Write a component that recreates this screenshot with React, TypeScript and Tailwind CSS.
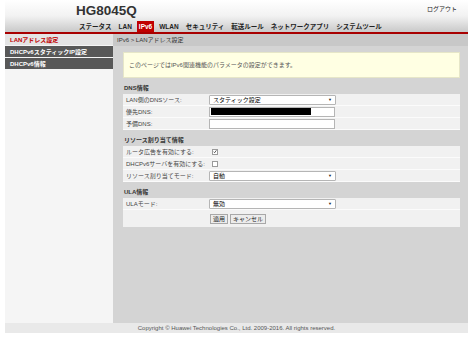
const font = { fontFamily: '"Liberation Sans", "Noto Sans CJK JP", sans-serif' };

const tabs = ["ステータス", "LAN", "IPv6", "WLAN", "セキュリティ", "転送ルール", "ネットワークアプリ", "システムツール"];

const sideItems = [
  { label: "LANアドレス設定", active: true },
  { label: "DHCPv6スタティックIP設定", active: false },
  { label: "DHCPv6情報", active: false },
];

function Select({ value }: { value: string }) {
  return (
    <div className="flex h-[10px] w-[127px] items-center justify-between rounded-[1px] border border-[#b5b5b5] bg-white pl-[3px] pr-[3px]">
      <span>{value}</span>
      <span className="text-[4px] text-[#222]">▼</span>
    </div>
  );
}

function Row({ label, children }: { label: string; children?: React.ReactNode }) {
  return (
    <div className="flex h-[12px] items-center border-b border-[#fbfbfb] bg-[#f1f1f1]">
      <div className="w-[86px] pl-[3px] text-[#444]">{label}</div>
      <div className="flex items-center">{children}</div>
    </div>
  );
}

function Heading({ children }: { children: React.ReactNode }) {
  return <div className="pb-[2px] pl-[1px] pt-[6px] font-bold leading-[8px] text-[#333]">{children}</div>;
}

function Checkbox({ checked }: { checked?: boolean }) {
  return (
    <div className="ml-[3px] flex h-[6px] w-[6px] items-center justify-center border border-[#9a9a9a] bg-white">
      {checked && (
        <svg width="5" height="5" viewBox="0 0 10 10">
          <path d="M1.5 5.5 L4 8 L8.5 2" fill="none" stroke="#333" strokeWidth="2" />
        </svg>
      )}
    </div>
  );
}

export default function App() {
  return (
    <div className="h-[337px] w-[474px] overflow-hidden bg-white text-[6px] leading-[8px]" style={font}>
      <div className="ml-[5px] w-[463px]">
        {/* header */}
        <div className="h-[32px] bg-gradient-to-b from-white via-[#f2f2f2] to-[#c9c9c9]">
          <div className="flex items-start justify-between">
            <div className="pl-[71px] pt-[3px] text-[13.5px] font-bold leading-[15px] text-[#333]">HG8045Q</div>
            <div className="pr-[11px] pt-[5px] text-[#222]">ログアウト</div>
          </div>
          <div className="mt-[3px] flex h-[11px] items-stretch gap-[3px] pl-[72px] text-[6.5px]">
            {tabs.map((t) => (
              <div
                key={t}
                className={`flex items-center px-[2px] font-bold ${
                  t === "IPv6" ? "bg-[#c00000] text-white" : "text-[#222]"
                }`}
              >
                {t}
              </div>
            ))}
          </div>
        </div>
        <div className="h-[2px] bg-[#a80000]" />

        {/* body */}
        <div className="flex h-[289px]">
          <div className="w-[108px] bg-[#f5f5f5]">
            {sideItems.map((s) => (
              <div
                key={s.label}
                className={`flex h-[12px] items-center border-b border-[#f5f5f5] pl-[5px] font-bold ${
                  s.active ? "bg-[#e4e4e4] text-[#c00000]" : "bg-[#585858] text-white"
                }`}
              >
                {s.label}
              </div>
            ))}
          </div>

          <div className="flex-1 bg-[#d4d4d4]">
            <div className="flex h-[12px] items-center bg-[#c8c8c8] pl-[4px] text-[#333]">IPv6 &gt; LANアドレス設定</div>
            <div className="pl-[10px] pr-[8px] pt-[6px]">
              <div className="flex h-[26px] items-center border border-[#e6e6c8] bg-[#ffffe3] pl-[5px] text-[#555]">
                このページではIPv6関連機能のパラメータの設定ができます。
              </div>

              <Heading>DNS情報</Heading>
              <Row label="LAN側のDNSソース:">
                <Select value="スタティック設定" />
              </Row>
              <Row label="優先DNS:">
                <div className="flex h-[10px] w-[126px] items-center border border-[#b5b5b5] bg-white pl-[1px]">
                  <div className="h-[7px] w-[100px] bg-black" />
                </div>
              </Row>
              <Row label="予備DNS:">
                <div className="h-[10px] w-[126px] border border-[#b5b5b5] bg-white" />
              </Row>

              <Heading>リソース割り当て情報</Heading>
              <Row label="ルータ広告を有効にする:">
                <Checkbox checked />
              </Row>
              <Row label="DHCPv6サーバを有効にする:">
                <Checkbox />
              </Row>
              <Row label="リソース割り当てモード:">
                <Select value="自動" />
              </Row>

              <Heading>ULA情報</Heading>
              <Row label="ULAモード:">
                <Select value="無効" />
              </Row>
              <div className="flex h-[17px] items-center gap-[2px] bg-[#f1f1f1] pl-[87px]">
                <div className="flex h-[10px] items-center border border-[#a8a8a8] bg-[#ececec] px-[2px] text-[#222]">適用</div>
                <div className="flex h-[10px] items-center border border-[#a8a8a8] bg-[#ececec] px-[2px] text-[#222]">キャンセル</div>
              </div>
            </div>
          </div>
        </div>

        {/* footer */}
        <div className="flex h-[10px] items-center justify-center bg-[#e9e9e9] text-[#555]">
          Copyright © Huawei Technologies Co., Ltd. 2009-2016. All rights reserved.
        </div>
      </div>
    </div>
  );
}
